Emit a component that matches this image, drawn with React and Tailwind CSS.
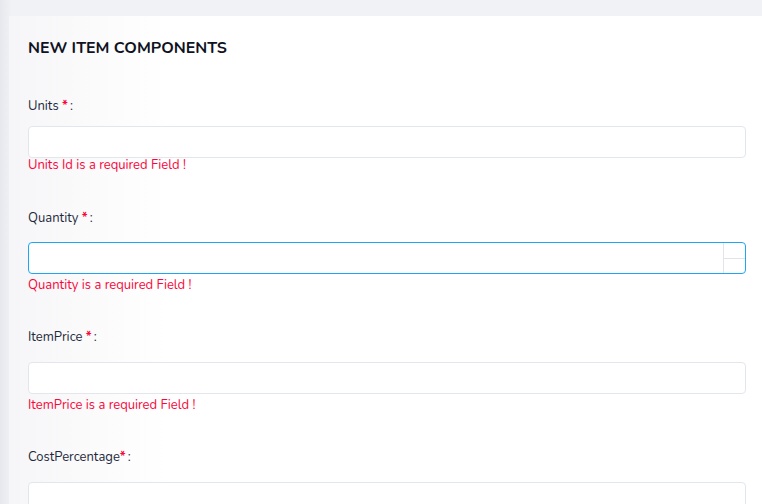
import React from "react";

const font = { fontFamily: "Nunito, Lato, 'Open Sans', sans-serif" };

const fields = [
  { label: "Units", gap: true, error: "Units Id is a required Field !", labelClass: "mt-[39px]", inputClass: "mt-[11px]", errorClass: "-mt-[1px]" },
  { label: "Quantity", gap: true, error: "Quantity is a required Field !", focused: true, labelClass: "mt-[36px]", inputClass: "mt-[15px]", errorClass: "mt-[3px]" },
  { label: "ItemPrice", gap: true, error: "ItemPrice is a required Field !", labelClass: "mt-[35px]", inputClass: "mt-[16px]", errorClass: "mt-[3px]" },
  { label: "CostPercentage", gap: false, labelClass: "mt-[35px]", inputClass: "mt-[16px]" },
];

const Field = ({ f }) => (
  <div className="flex flex-col">
    <label className={`${f.labelClass} text-[13px] leading-[18px] text-[#1e2a3b]`}>
      {f.label}
      {f.gap ? " " : ""}
      <span className="font-bold text-[#f8073a]">*</span>
      <span className="ml-[2px]">:</span>
    </label>
    {f.focused ? (
      <div className={`${f.inputClass} flex h-[32px] w-[718px] rounded-[4px] border border-[#1ea5f5] bg-white`}>
        <div className="flex-1" />
        <div className="flex w-[22px] flex-col border-l border-[#e1e4ea]">
          <div className="flex-1 border-b border-[#e1e4ea]" />
          <div className="flex-1" />
        </div>
      </div>
    ) : (
      <div className={`${f.inputClass} h-[32px] w-[718px] rounded-[4px] border border-[#e3e6ec] bg-white`} />
    )}
    {f.error && (
      <p className={`${f.errorClass} text-[13px] leading-[16px] text-[#f8073a]`}>{f.error}</p>
    )}
  </div>
);

export default function App() {
  return (
    <div className="h-[504px] w-[762px] overflow-hidden bg-gradient-to-r from-[#e7e8ed] via-[#f1f2f6] via-[12px] to-[#f1f2f6] pt-[16px] pl-[9px]" style={font}>
      <div className="h-[520px] w-[760px] bg-gradient-to-r from-[#f6f6f8] via-white via-[160px] to-white pt-[22px] pl-[19px]">
        <h2 className="text-[16px] font-bold leading-[20px] text-[#0f1222]">NEW ITEM COMPONENTS</h2>
        {fields.map((f) => (
          <Field key={f.label} f={f} />
        ))}
      </div>
    </div>
  );
}
